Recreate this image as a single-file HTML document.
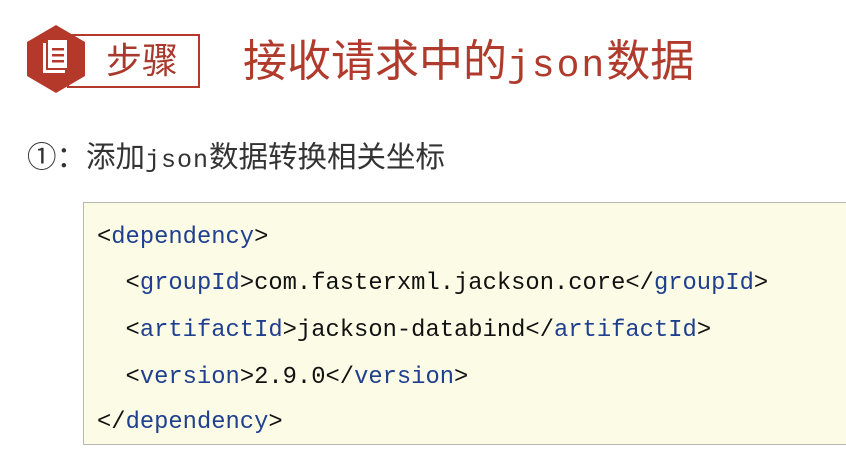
<!DOCTYPE html>
<html><head><meta charset="utf-8"><style>
html,body{margin:0;padding:0;background:#fff;width:846px;height:457px;overflow:hidden;position:relative;font-family:"Liberation Sans","Noto Sans CJK SC",sans-serif}
.box{position:absolute;left:67px;top:34px;width:133px;height:54px;border:2px solid #b5392a;box-sizing:border-box}
.bt{position:absolute;left:106px;top:37px;font-size:36px;line-height:48px;color:#a8392c}
.title{position:absolute;left:243px;top:34px;font-size:44px;line-height:56px;color:#b03a2c;white-space:nowrap}
.m{font-family:"Liberation Mono",monospace}
.sub{position:absolute;left:27px;top:139px;font-size:29.5px;line-height:38px;color:#333;white-space:nowrap}
.code{position:absolute;left:83px;top:202px;width:780px;height:243px;background:#fcfbe6;border:1px solid #b8b8b0;box-sizing:border-box}
.code div{position:absolute;left:13px;font-family:"Liberation Mono",monospace;font-size:23.8px;color:#111;white-space:pre}
.t{color:#1f3f8f}
</style></head><body>
<svg style="position:absolute;left:26px;top:25px" width="60" height="68" viewBox="0 0 60 68">
<polygon points="30,0 59,17 59,51 30,68 1,51 1,17" fill="#b5392a"/>
<rect x="17" y="18" width="22" height="30" fill="#fff"/>
<rect x="21" y="14" width="22" height="30" fill="#fff" stroke="#b5392a" stroke-width="2"/>
<rect x="26" y="23" width="12" height="2.5" fill="#b5392a"/>
<rect x="26" y="29" width="12" height="2.5" fill="#b5392a"/>
<rect x="26" y="35" width="12" height="2.5" fill="#b5392a"/>
</svg>
<div class="box"></div>
<div class="bt">步骤</div>
<div class="title">接收请求中的<span class="m" style="font-size:38px;letter-spacing:2px">json</span>数据</div>
<div class="sub">①：添加<span class="m" style="font-size:25px;letter-spacing:1px">json</span>数据转换相关坐标</div>
<div class="code">
<div style="top:21px">&lt;<span class="t">dependency</span>&gt;</div>
<div style="top:67px">  &lt;<span class="t">groupId</span>&gt;com.fasterxml.jackson.core&lt;/<span class="t">groupId</span>&gt;</div>
<div style="top:114px">  &lt;<span class="t">artifactId</span>&gt;jackson-databind&lt;/<span class="t">artifactId</span>&gt;</div>
<div style="top:161px">  &lt;<span class="t">version</span>&gt;2.9.0&lt;/<span class="t">version</span>&gt;</div>
<div style="top:206px">&lt;/<span class="t">dependency</span>&gt;</div>
</div>
</body></html>
